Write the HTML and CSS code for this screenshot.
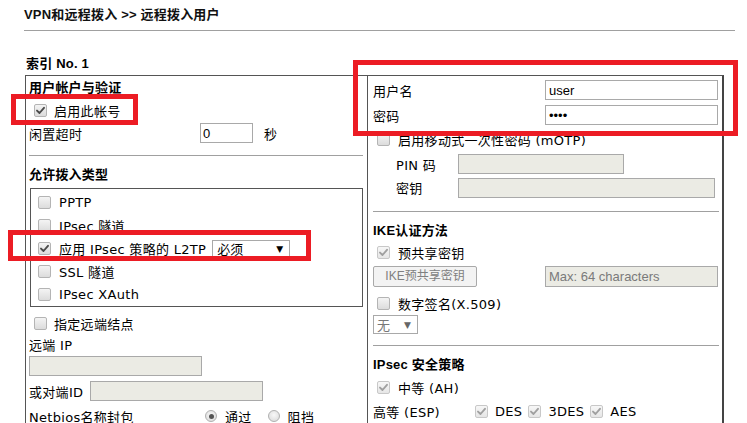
FILE: index.html
```html
<!DOCTYPE html>
<html lang="zh-CN">
<head>
<meta charset="utf-8">
<title>远程拨入用户</title>
<link rel="stylesheet" href="styles.css">
</head>
<body>
<div class="page">
  <div class="title">VPN和远程拨入 &gt;&gt; 远程拨入用户</div>
  <div class="index">索引 No. 1</div>
  <div class="panel">
    <div class="col left">
      <div class="h h-acct">用户帐户与验证</div>
      <div class="row r-enable"><span class="cb on"><svg viewBox="0 0 11 11"><path d="M2 5.6 L4.5 8 L9 2.8"/></svg></span><span class="t">启用此帐号</span></div>
      <div class="row r-idle"><span class="lab w-idle">闲置超时</span><input class="in in-idle" type="text" value="0"><span class="unit">秒</span></div>
      <div class="sep sep-l"></div>
      <div class="h h-type">允许拨入类型</div>
      <div class="typebox">
        <div class="trow"><span class="cb"></span><span class="t">PPTP</span></div>
        <div class="trow"><span class="cb"></span><span class="t">IPsec 隧道</span></div>
        <div class="trow"><span class="cb on"><svg viewBox="0 0 11 11"><path d="M2 5.6 L4.5 8 L9 2.8"/></svg></span><span class="t">应用 IPsec 策略的 L2TP</span><span class="sel sel-l2tp"><span>必须</span><span class="arr">▼</span></span></div>
        <div class="trow"><span class="cb"></span><span class="t">SSL 隧道</span></div>
        <div class="trow"><span class="cb"></span><span class="t">IPsec XAuth</span></div>
      </div>
      <div class="row r-remote"><span class="cb"></span><span class="t">指定远端结点</span></div>
      <div class="row r-rip"><span class="lab">远端 IP</span></div>
      <div class="row r-ipin"><input class="in dis w173" type="text" disabled></div>
      <div class="row r-peer"><span class="lab w-peer">或对端ID</span><input class="in dis w173" type="text" disabled></div>
      <div class="row r-netbios"><span class="lab w-nb">Netbios名称封包</span><span class="rd on"></span><span class="rt">通过</span><span class="rd rd2"></span><span class="rt">阻挡</span></div>
    </div>
    <div class="col right">
      <div class="row r-user"><span class="lab w-r">用户名</span><input class="in w173 txt" type="text" value="user"></div>
      <div class="row r-pass"><span class="lab w-r">密码</span><input class="in w173 txt" type="password" value="abcd"></div>
      <div class="row r-motp"><span class="cb cb-r"></span><span class="t">启用移动式一次性密码 (mOTP)</span></div>
      <div class="row r-pin"><span class="lab w-pin">PIN 码</span><input class="in dis w-pinin" type="text" disabled></div>
      <div class="row r-key"><span class="lab w-pin">密钥</span><input class="in dis w-keyin" type="text" disabled></div>
      <div class="sep sep-r1"></div>
      <div class="h h-sub">IKE认证方法</div>
      <div class="row r-psk"><span class="cb cb-r on dim"><svg viewBox="0 0 11 11"><path d="M2 5.6 L4.5 8 L9 2.8"/></svg></span><span class="t">预共享密钥</span></div>
      <div class="row r-btn"><span class="btn">IKE预共享密钥</span><input class="in dis w173 txt h21" type="text" placeholder="Max: 64 characters" disabled></div>
      <div class="row r-x509"><span class="cb cb-r"></span><span class="t">数字签名(X.509)</span></div>
      <div class="row r-sel"><span class="sel sel-none"><span>无</span><span class="arr">▼</span></span></div>
      <div class="sep sep-r2"></div>
      <div class="h h-sub">IPsec 安全策略</div>
      <div class="row r-ah"><span class="cb cb-r on dim"><svg viewBox="0 0 11 11"><path d="M2 5.6 L4.5 8 L9 2.8"/></svg></span><span class="t">中等 (AH)</span></div>
      <div class="row r-esp"><span class="lab w-esp">高等 (ESP)</span><span class="cb on dim"><svg viewBox="0 0 11 11"><path d="M2 5.6 L4.5 8 L9 2.8"/></svg></span><span class="t e1">DES</span><span class="cb on dim"><svg viewBox="0 0 11 11"><path d="M2 5.6 L4.5 8 L9 2.8"/></svg></span><span class="t e2">3DES</span><span class="cb on dim"><svg viewBox="0 0 11 11"><path d="M2 5.6 L4.5 8 L9 2.8"/></svg></span><span class="t e3">AES</span></div>
    </div>
  </div>
  <div class="mark m1"></div>
  <div class="mark m2"></div>
  <div class="mark m3"></div>
</div>
</body>
</html>
```
FILE: styles.css
```css
* { box-sizing: border-box; }
html, body { margin: 0; padding: 0; background: #fff; }
body {
  font-family: "DejaVu Sans", "Noto Sans CJK SC", sans-serif;
  font-size: 13px;
  letter-spacing: 0.3px;
  color: #000;
  overflow: hidden;
}
.page {
  position: relative;
  width: 747px;
  height: 423px;
  overflow: hidden;
  padding-left: 24px;
}
.title {
  height: 31px;
  line-height: 30px;
  margin-right: 12px;
  border-bottom: 1px solid #a0a0a0;
  font-family: "Liberation Sans", "Noto Sans CJK SC", sans-serif;
  font-weight: bold;
  letter-spacing: 0.2px;
  color: #111;
}
.index {
  margin-top: 25px;
  height: 19px;
  line-height: 16px;
  padding-left: 2px;
  font-family: "Liberation Sans", "Noto Sans CJK SC", sans-serif;
  font-weight: bold;
  letter-spacing: 0.2px;
}
.panel {
  display: flex;
  margin-left: 1px;
  width: 699px;
  height: 420px;
  border-top: 1px solid #555;
  border-left: 1px solid #555;
  border-right: 2px solid #444;
}
.col { flex: none; }
.left { width: 342px; padding-left: 3px; border-right: 1px solid #555; }
.right { width: 354px; padding: 2px 4px 0 5px; }

.h {
  font-family: "Liberation Sans", "Noto Sans CJK SC", sans-serif;
  font-weight: bold;
  letter-spacing: 0.2px;
}
.h-acct { height: 24px; line-height: 24px; }
.h-type { height: 32px; padding-top: 8px; line-height: 22px; }
.h-sub { height: 30px; padding-top: 9px; line-height: 20px; }

.row { display: flex; align-items: center; white-space: nowrap; }
.lab { flex: none; }
.t { white-space: nowrap; }

.sep { height: 1px; background: #a0a0a0; }
.sep-l { margin-top: 10px; width: 334px; }
.sep-r1 { margin-top: 12px; width: 346px; }
.sep-r2 { margin-top: 11px; width: 346px; }

/* checkbox */
.cb {
  flex: none;
  display: inline-flex;
  align-items: center;
  justify-content: center;
  width: 13px;
  height: 13px;
  border: 1px solid #b4b4b4;
  border-radius: 2px;
  background: linear-gradient(#f4f4f4, #dcdcdc);
}
.cb svg { width: 11px; height: 11px; }
.cb svg path { fill: none; stroke: #4a4a4a; stroke-width: 1.9; stroke-linecap: round; stroke-linejoin: round; }
.cb.dim { border-color: #c8c8c8; background: linear-gradient(#f7f7f7, #e6e6e6); }
.cb.dim svg path { stroke: #a0a0a0; }

/* radio */
.rd {
  flex: none;
  display: inline-block;
  width: 12px;
  height: 12px;
  border-radius: 50%;
  border: 1px solid #b0b0b0;
  background: radial-gradient(circle at 50% 40%, #f8f8f8, #d8d8d8);
  position: relative;
}
.rd.on::after {
  content: "";
  position: absolute;
  left: 2.5px;
  top: 2.5px;
  width: 5px;
  height: 5px;
  border-radius: 50%;
  background: #555;
}
.rt { margin-left: 8px; }
.rd2 { margin-left: 16px; }

/* inputs */
.in {
  flex: none;
  height: 20px;
  border: 1px solid #a9a9a9;
  padding: 0 2px;
  margin: 0;
  font-family: "Liberation Sans", "Noto Sans CJK SC", sans-serif;
  font-size: 13px;
  letter-spacing: 0;
  color: #000;
  background: #fff;
  outline: none;
}
.in.dis { background: #ebebe4; }
.in.h21 { height: 21px; }
.in::placeholder { color: #7a7a7a; }
.w173 { width: 173px; }

/* left column rows */
.r-enable { height: 21px; }
.r-enable .cb { margin-left: 5px; }
.r-enable .t { margin-left: 7px; }
.r-idle { height: 24px; }
.w-idle { width: 171px; }
.in-idle { width: 53px; }
.unit { margin-left: 11px; }

.typebox {
  margin-left: 1px;
  width: 333px;
  border: 1px solid #555;
  padding: 2px 0 0 7px;
}
.trow { display: flex; align-items: center; height: 23px; white-space: nowrap; }
.trow .t { margin-left: 8px; }

.sel {
  flex: none;
  display: inline-flex;
  align-items: center;
  justify-content: space-between;
  border: 1px solid #a9a9a9;
  background: #fff;
  font-family: "Noto Sans CJK SC", sans-serif;
  letter-spacing: 0;
}
.sel .arr { font-family: "DejaVu Sans", sans-serif; font-size: 9px; }
.sel-l2tp { margin-left: 6px; width: 78px; height: 18px; padding: 0 6px 0 4px; }
.sel-none { width: 45px; height: 19px; padding: 0 6px 0 3px; color: #777; }
.sel-none .arr { color: #666; }

.r-remote { margin-top: 5px; height: 22px; }
.r-remote .cb { margin-left: 5px; }
.r-remote .t { margin-left: 7px; }
.r-rip { height: 20px; }
.r-ipin { height: 24px; }
.r-peer { height: 26px; }
.w-peer { width: 61px; }
.r-netbios { height: 24px; }
.w-nb { width: 176px; }

/* right column rows */
.w-r { width: 172px; }
.r-user { height: 24px; }
.r-pass { height: 24px; margin-top: 1px; }
.txt { padding-left: 3px; }
.cb-r { margin-left: 4px; }
.right .row > .cb-r + .t { margin-left: 8px; }
.r-motp { height: 25px; }
.r-pin { height: 24px; }
.r-key { height: 23px; }
.w-pin { width: 85px; padding-left: 23px; }
.w-pinin { width: 166px; }
.w-keyin { width: 257px; }
.r-psk { height: 20px; }
.r-btn { height: 29px; justify-content: space-between; }
.btn {
  flex: none;
  width: 104px;
  height: 21px;
  line-height: 19px;
  border: 1px solid #a9a9a9;
  border-radius: 2px;
  background: #f3f3f3;
  color: #808080;
  text-align: center;
  font-family: "Liberation Sans", "Noto Sans CJK SC", sans-serif;
  font-size: 12px;
  letter-spacing: 0;
}
.r-x509 { height: 24px; }
.r-sel { height: 19px; }
.r-ah { height: 23px; }
.r-esp { height: 24px; }
.w-esp { width: 102px; }
.r-esp .e1 { margin-left: 7px; margin-right: 6px; }
.r-esp .e2 { margin-left: 7px; margin-right: 6px; }
.r-esp .e3 { margin-left: 7px; }

/* red annotation frames */
.mark {
  position: absolute;
  border: 5px solid #ec1c24;
  pointer-events: none;
}
.m1 { left: 11px; top: 94px; width: 127px; height: 31px; }
.m2 { left: 353px; top: 60px; width: 385px; height: 76px; }
.m3 { left: 8px; top: 230px; width: 303px; height: 31px; }
```
